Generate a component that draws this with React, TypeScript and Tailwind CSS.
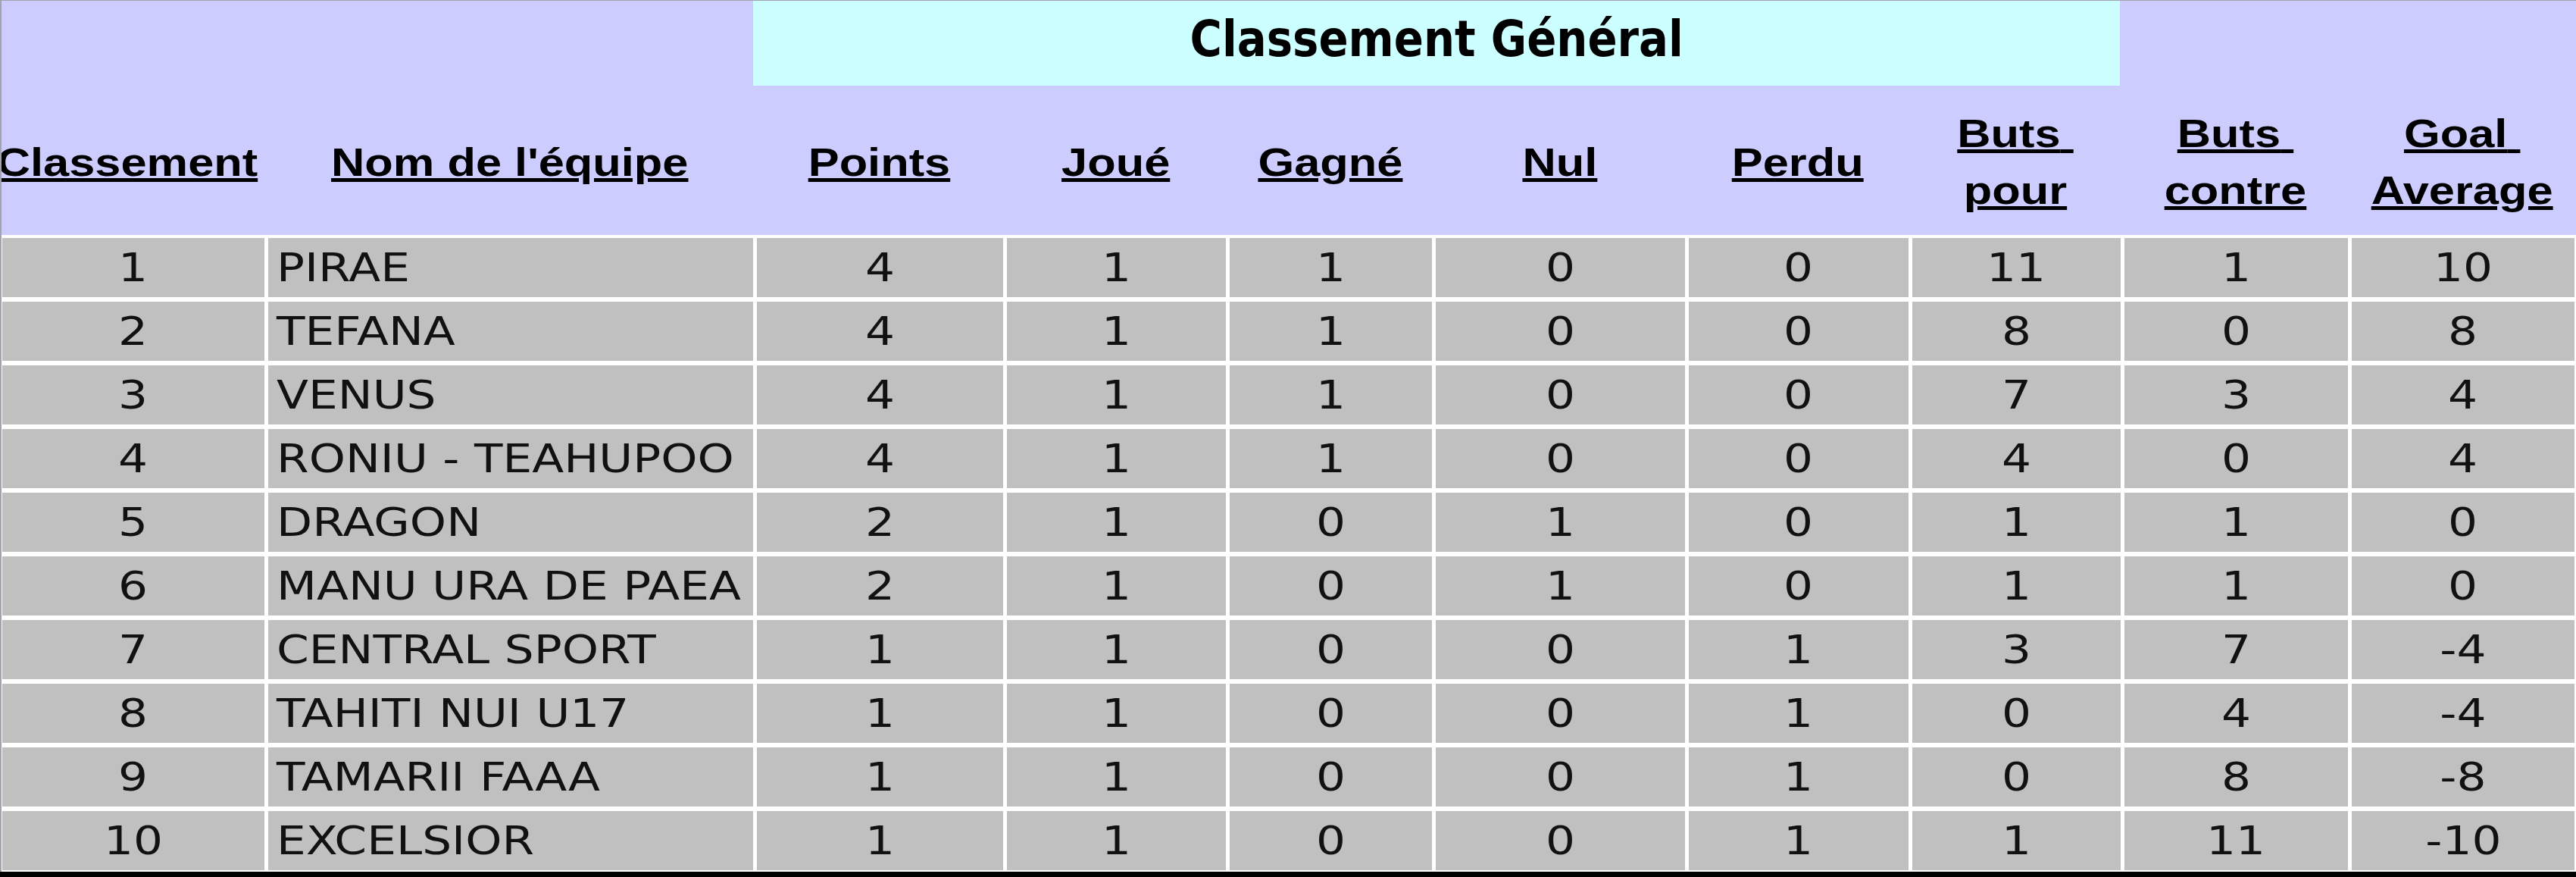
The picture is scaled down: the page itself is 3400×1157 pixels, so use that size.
import React from 'react';

interface Row {
  rank: number;
  team: string;
  points: number;
  played: number;
  won: number;
  drawn: number;
  lost: number;
  goalsFor: number;
  goalsAgainst: number;
  average: number;
}

const rows: Row[] = [
  { rank: 1, team: 'PIRAE', points: 4, played: 1, won: 1, drawn: 0, lost: 0, goalsFor: 11, goalsAgainst: 1, average: 10 },
  { rank: 2, team: 'TEFANA', points: 4, played: 1, won: 1, drawn: 0, lost: 0, goalsFor: 8, goalsAgainst: 0, average: 8 },
  { rank: 3, team: 'VENUS', points: 4, played: 1, won: 1, drawn: 0, lost: 0, goalsFor: 7, goalsAgainst: 3, average: 4 },
  { rank: 4, team: 'RONIU - TEAHUPOO', points: 4, played: 1, won: 1, drawn: 0, lost: 0, goalsFor: 4, goalsAgainst: 0, average: 4 },
  { rank: 5, team: 'DRAGON', points: 2, played: 1, won: 0, drawn: 1, lost: 0, goalsFor: 1, goalsAgainst: 1, average: 0 },
  { rank: 6, team: 'MANU URA DE PAEA', points: 2, played: 1, won: 0, drawn: 1, lost: 0, goalsFor: 1, goalsAgainst: 1, average: 0 },
  { rank: 7, team: 'CENTRAL SPORT', points: 1, played: 1, won: 0, drawn: 0, lost: 1, goalsFor: 3, goalsAgainst: 7, average: -4 },
  { rank: 8, team: 'TAHITI NUI U17', points: 1, played: 1, won: 0, drawn: 0, lost: 1, goalsFor: 0, goalsAgainst: 4, average: -4 },
  { rank: 9, team: 'TAMARII FAAA', points: 1, played: 1, won: 0, drawn: 0, lost: 1, goalsFor: 0, goalsAgainst: 8, average: -8 },
  { rank: 10, team: 'EXCELSIOR', points: 1, played: 1, won: 0, drawn: 0, lost: 1, goalsFor: 1, goalsAgainst: 11, average: -10 },
];

// same column widths for header and body
const grid =
  'grid grid-cols-[346px_640px_325px_289px_267px_329px_290px_275px_295px_294px] gap-x-[5px]';

function HeadLink({ children }: { children: React.ReactNode }) {
  return (
    <span className="inline-block scale-x-[1.18] whitespace-nowrap text-center font-['Liberation_Sans',Arial,sans-serif] text-[52px] font-bold leading-[75px] text-black underline decoration-[5px] underline-offset-[3px]">
      {children}
    </span>
  );
}

function HeadCell({ children }: { children: React.ReactNode }) {
  return <div className="flex items-center justify-center">{children}</div>;
}

function Num({ value }: { value: number }) {
  return (
    <div className="flex items-center justify-center bg-[#c0c0c0]">
      <span className="inline-block scale-x-[1.18] font-['DejaVu_Sans',sans-serif] text-[52px] leading-none text-[#111]">
        {value}
      </span>
    </div>
  );
}

export default function App() {
  return (
    <div className="h-[1157px] w-[3400px] overflow-hidden bg-black">
      <div className="h-[1150px] border-l-2 border-t border-[#a3a3ad] bg-white">
        {/* header */}
        <div className="bg-[#ccccff]">
          <div className={`${grid} h-[112px]`}>
            <div />
            <div />
            <div className="col-span-6 -ml-[4px] flex items-start justify-center bg-[#ccffff] pt-[18px]">
              <span className="inline-block scale-x-[0.875] font-['DejaVu_Sans',sans-serif] text-[66px] font-bold leading-none text-black">
                Classement Général
              </span>
            </div>
            <div />
            <div />
          </div>
          <div className={`${grid} h-[197px] pt-[5px]`}>
            <div className="flex items-center justify-center overflow-hidden pr-[14px]">
              <HeadLink>Classement</HeadLink>
            </div>
            <HeadCell>
              <HeadLink>Nom de l'équipe</HeadLink>
            </HeadCell>
            <HeadCell>
              <HeadLink>Points</HeadLink>
            </HeadCell>
            <HeadCell>
              <HeadLink>Joué</HeadLink>
            </HeadCell>
            <HeadCell>
              <HeadLink>Gagné</HeadLink>
            </HeadCell>
            <HeadCell>
              <HeadLink>Nul</HeadLink>
            </HeadCell>
            <HeadCell>
              <HeadLink>Perdu</HeadLink>
            </HeadCell>
            <HeadCell>
              <HeadLink>
                Buts{'\u00a0'}
                <br />
                pour
              </HeadLink>
            </HeadCell>
            <HeadCell>
              <HeadLink>
                Buts{'\u00a0'}
                <br />
                contre
              </HeadLink>
            </HeadCell>
            <HeadCell>
              <HeadLink>
                Goal{'\u00a0'}
                <br />
                Average
              </HeadLink>
            </HeadCell>
          </div>
        </div>

        {/* body */}
        <div className="flex flex-col gap-y-[6px] pb-[2px] pl-[1px] pt-[4px]">
          {rows.map((r) => (
            <div key={r.rank} className={`${grid} h-[78px]`}>
              <Num value={r.rank} />
              <div className="flex items-center bg-[#c0c0c0] pl-[11px]">
                <span className="inline-block origin-left scale-x-[1.18] whitespace-nowrap font-['DejaVu_Sans',sans-serif] text-[52px] leading-none text-[#111]">
                  {r.team}
                </span>
              </div>
              <Num value={r.points} />
              <Num value={r.played} />
              <Num value={r.won} />
              <Num value={r.drawn} />
              <Num value={r.lost} />
              <Num value={r.goalsFor} />
              <Num value={r.goalsAgainst} />
              <Num value={r.average} />
            </div>
          ))}
        </div>
      </div>
    </div>
  );
}
